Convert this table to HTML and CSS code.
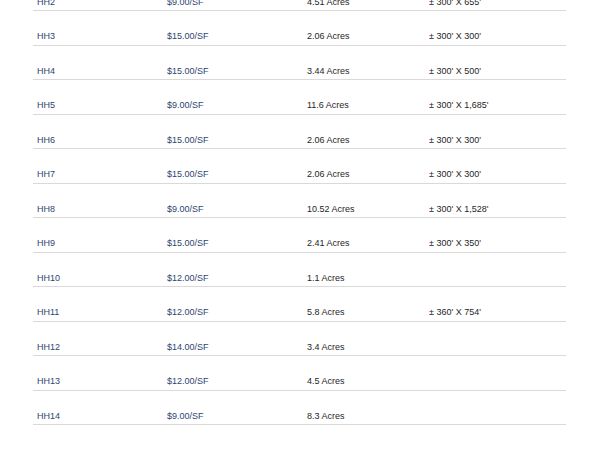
FILE: index.html
```html
<!DOCTYPE html>
<html>
<head>
<meta charset="utf-8">
<link rel="stylesheet" href="styles.css">
</head>
<body>
<div class="viewport">
  <div class="table">
    <div class="row"><span class="c1">HH2</span><span class="c2">$9.00/SF</span><span class="c3">4.51 Acres</span><span class="c4">± 300' X 655'</span></div>
    <div class="row"><span class="c1">HH3</span><span class="c2">$15.00/SF</span><span class="c3">2.06 Acres</span><span class="c4">± 300' X 300'</span></div>
    <div class="row"><span class="c1">HH4</span><span class="c2">$15.00/SF</span><span class="c3">3.44 Acres</span><span class="c4">± 300' X 500'</span></div>
    <div class="row"><span class="c1">HH5</span><span class="c2">$9.00/SF</span><span class="c3">11.6 Acres</span><span class="c4">± 300' X 1,685'</span></div>
    <div class="row"><span class="c1">HH6</span><span class="c2">$15.00/SF</span><span class="c3">2.06 Acres</span><span class="c4">± 300' X 300'</span></div>
    <div class="row"><span class="c1">HH7</span><span class="c2">$15.00/SF</span><span class="c3">2.06 Acres</span><span class="c4">± 300' X 300'</span></div>
    <div class="row"><span class="c1">HH8</span><span class="c2">$9.00/SF</span><span class="c3">10.52 Acres</span><span class="c4">± 300' X 1,528'</span></div>
    <div class="row"><span class="c1">HH9</span><span class="c2">$15.00/SF</span><span class="c3">2.41 Acres</span><span class="c4">± 300' X 350'</span></div>
    <div class="row"><span class="c1">HH10</span><span class="c2">$12.00/SF</span><span class="c3">1.1 Acres</span><span class="c4"></span></div>
    <div class="row"><span class="c1">HH11</span><span class="c2">$12.00/SF</span><span class="c3">5.8 Acres</span><span class="c4">± 360' X 754'</span></div>
    <div class="row"><span class="c1">HH12</span><span class="c2">$14.00/SF</span><span class="c3">3.4 Acres</span><span class="c4"></span></div>
    <div class="row"><span class="c1">HH13</span><span class="c2">$12.00/SF</span><span class="c3">4.5 Acres</span><span class="c4"></span></div>
    <div class="row"><span class="c1">HH14</span><span class="c2">$9.00/SF</span><span class="c3">8.3 Acres</span><span class="c4"></span></div>
  </div>
</div>
</body>
</html>
```
FILE: styles.css
```css
html, body {
  margin: 0;
  padding: 0;
  background: #ffffff;
}
.viewport {
  height: 450px;
  overflow: hidden;
}
.table {
  margin: -23.5px 34px 0 33px;
  font-family: "Liberation Sans", Arial, sans-serif;
  font-size: 9px;
  line-height: 10px;
}
.row {
  display: grid;
  grid-template-columns: 130px 140px 122px 1fr;
  align-items: end;
  height: 34.5px;
  box-sizing: border-box;
  padding: 0 0 3.5px 4px;
  border-bottom: 1.5px solid #d9d9d9;
}
.c1, .c2 {
  color: #2d4670;
}
.c3, .c4 {
  color: #262626;
}
```
